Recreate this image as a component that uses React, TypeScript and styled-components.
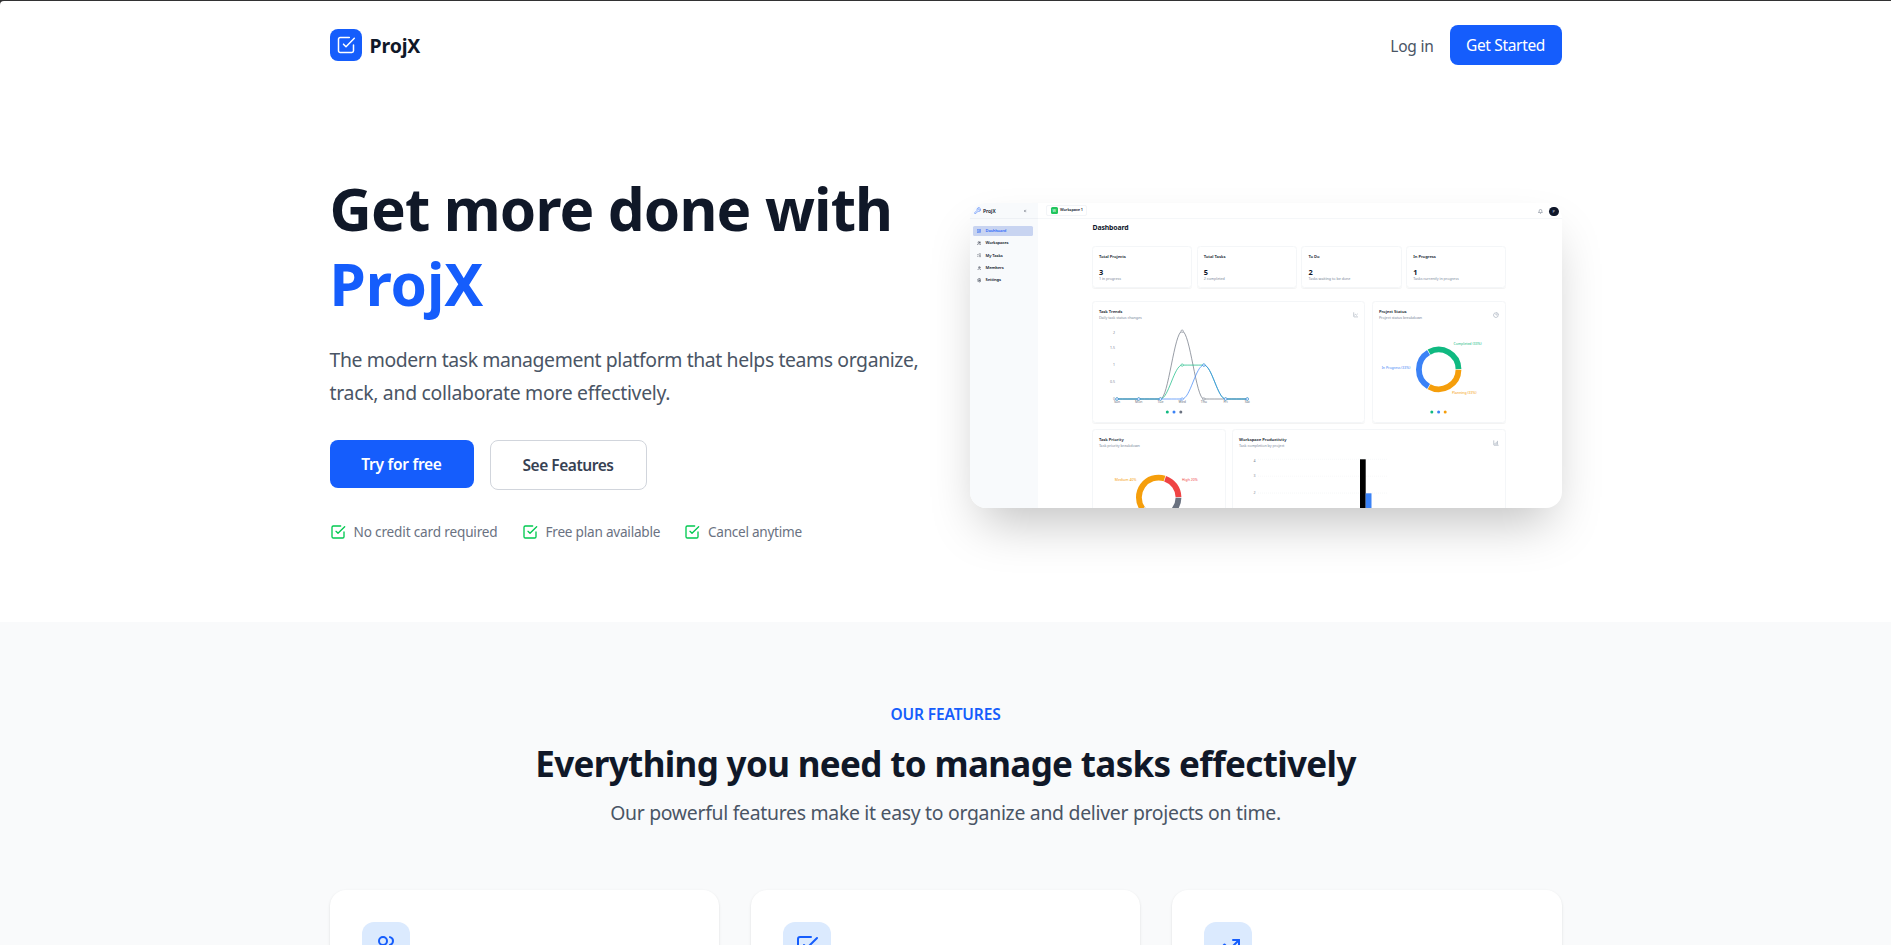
import React from "react";
import styled, { createGlobalStyle } from "styled-components";
import { FiCheckSquare, FiTrendingUp, FiUsers } from "react-icons/fi";
import {
  Bell,
  ChartColumnIncreasing,
  ChartLine,
  ChartPie,
  ChevronsLeft,
  LayoutDashboard,
  ListChecks,
  Settings,
  User,
  Users,
  Wrench,
} from "lucide-react";

const GlobalStyle = createGlobalStyle`
  * { box-sizing: border-box; }
  html, body { margin: 0; padding: 0; }
  html { overflow: hidden; background: #323233; }
  body { font-family: "Segoe UI", "Noto Sans", sans-serif; color: #101828; }
  h1, h2, p { margin: 0; }
  svg { display: block; flex-shrink: 0; }
`;

/* ---------- Page ---------- */

const Page = styled.div`
  height: 945px;
  overflow: hidden;
  padding-top: 1px;
  background: #323233;
`;

const Surface = styled.div`
  height: 100%;
  background: #fff;
  border-top-left-radius: 4px;
`;

const Container = styled.div`
  width: 1280px;
  margin: 0 auto;
  padding: 0 24px;
`;

const Header = styled(Container)`
  display: flex;
  align-items: center;
  justify-content: space-between;
  height: 88px;
`;

const Brand = styled.div`
  display: flex;
  align-items: center;
  gap: 8px;
`;

const BrandMark = styled.div`
  display: grid;
  place-items: center;
  width: 32px;
  height: 32px;
  border-radius: 8px;
  background: #155dfc;
  color: #fff;
`;

const BrandName = styled.span`
  font-size: 19.5px;
  line-height: 28px;
  font-weight: 700;
  letter-spacing: -0.15px;
  padding-top: 2px;
`;

const HeaderActions = styled.div`
  display: flex;
  align-items: center;
  gap: 16px;
`;

const LoginLink = styled.a`
  padding-top: 1px;
  font-size: 15.5px;
  line-height: 24px;
  letter-spacing: -0.25px;
  color: #4a5565;
`;

const GetStarted = styled.a`
  display: block;
  width: 112px;
  padding: 8px 0;
  border-radius: 8px;
  background: #155dfc;
  color: #fff;
  text-align: center;
  font-size: 15.5px;
  line-height: 24px;
  letter-spacing: -0.33px;
`;

/* ---------- Hero ---------- */

const Hero = styled(Container)`
  display: grid;
  grid-template-columns: 1fr 1fr;
  gap: 48px;
  align-items: center;
  padding-top: 80px;
  padding-bottom: 80px;
`;

const Title = styled.h1`
  padding-top: 2px;
  height: 150px;
  font-size: 58.4px;
  line-height: 75px;
  font-weight: 700;
  letter-spacing: -0.86px;
  white-space: nowrap;
`;

const TitleAccent = styled.span`
  display: block;
  color: #155dfc;
  letter-spacing: -0.1px;
`;

const Lead = styled.p`
  margin-top: 24px;
  padding-top: 1px;
  height: 65px;
  font-size: 19.4px;
  line-height: 32.5px;
  letter-spacing: -0.392px;
  color: #4a5565;
  white-space: nowrap;
`;

const LeadEnd = styled.span`
  display: block;
  letter-spacing: -0.29px;
`;

const HeroButtons = styled.div`
  display: flex;
  align-items: flex-start;
  gap: 16px;
  margin-top: 32px;
`;

const HeroButton = styled.a<{ $outline?: boolean }>`
  width: ${(p) => (p.$outline ? 157 : 144)}px;
  padding: 12px 0;
  border: ${(p) => (p.$outline ? "1px solid #d1d5dc" : "none")};
  border-radius: 8px;
  background: ${(p) => (p.$outline ? "#fff" : "#155dfc")};
  color: ${(p) => (p.$outline ? "#364153" : "#fff")};
  text-align: center;
  font-size: 15.5px;
  font-weight: 600;
  line-height: 24px;
  letter-spacing: ${(p) => (p.$outline ? -0.46 : -0.28)}px;
`;

const Perks = styled.div`
  display: flex;
  gap: 24px;
  margin-top: 32px;
`;

const Perk = styled.div<{ $width: number; $tracking: number }>`
  display: flex;
  align-items: center;
  gap: 8px;
  width: ${(p) => p.$width}px;
  font-size: 13.6px;
  line-height: 20px;
  letter-spacing: ${(p) => p.$tracking}px;
  color: #6a7282;
  white-space: nowrap;
  svg {
    color: #00c950;
  }
`;

/* ---------- Dashboard preview ---------- */

const Preview = styled.div`
  display: flex;
  height: 305px;
  border-radius: 16px;
  overflow: hidden;
  background: #fff;
  box-shadow: 0 25px 50px -12px rgba(0, 0, 0, 0.25);
  color: #0f172a;
  font-size: 4.1px;
  line-height: 6px;
`;

const Side = styled.div`
  width: 68px;
  background: #f8fafc;
`;

const SideHead = styled.div`
  display: flex;
  align-items: center;
  height: 16px;
  padding: 0 11px 0 4px;
  border-bottom: 0.5px solid #eef1f5;
  font-size: 5px;
  font-weight: 600;
  svg:first-child {
    color: #3b75fb;
    margin-right: 2px;
  }
  svg:last-child {
    margin-left: auto;
  }
`;

const Nav = styled.div`
  display: flex;
  flex-direction: column;
  gap: 2.4px;
  padding: 6.8px 5px 0 3px;
`;

const NavItem = styled.div<{ $active?: boolean }>`
  display: flex;
  align-items: center;
  gap: 4.5px;
  height: 10px;
  padding-left: 4px;
  border-radius: 1.6px;
  background: ${(p) => (p.$active ? "#c8d4f1" : "transparent")};
  color: ${(p) => (p.$active ? "#2f6bfa" : "#0f172a")};
  font-weight: 600;
  letter-spacing: -0.12px;
`;

const Main = styled.div`
  flex: 1;
`;

const TopBar = styled.div`
  display: flex;
  align-items: center;
  height: 16px;
  padding: 0 3px 0 8.5px;
  border-bottom: 0.5px solid #f5f7f9;
`;

const WorkspacePill = styled.div`
  display: flex;
  align-items: center;
  gap: 2.4px;
  width: 40.5px;
  height: 10.4px;
  padding-left: 3.6px;
  border: 0.5px solid #f3f5f8;
  border-radius: 2px;
  font-size: 3.9px;
  font-weight: 600;
  letter-spacing: -0.1px;
  white-space: nowrap;
`;

const WorkspaceBadge = styled.span`
  width: 7px;
  height: 7px;
  border-radius: 1.5px;
  background: #22c55e;
  color: #d9f7e4;
  text-align: center;
  font-size: 3.6px;
  line-height: 7px;
`;

const TopActions = styled.div`
  display: flex;
  align-items: center;
  gap: 6px;
  margin-left: auto;
  padding-top: 2px;
`;

const Avatar = styled.span`
  width: 9.4px;
  height: 9.4px;
  border-radius: 50%;
  background: #0f172a;
  color: #cbd5e1;
  text-align: center;
  font-size: 4px;
  line-height: 9.4px;
`;

const Board = styled.div`
  width: 414.4px;
  margin-left: 54.4px;
`;

const BoardTitle = styled.div`
  padding: 4.2px 0 0 0.6px;
  height: 26.7px;
  font-size: 6.9px;
  line-height: 10px;
  font-weight: 700;
  letter-spacing: -0.12px;
`;

const Panel = styled.div<{ $height: number }>`
  position: relative;
  height: ${(p) => p.$height}px;
  border: 1px solid #f4f6f8;
  border-radius: 3.5px;
  box-shadow: 0 0.4px 0.8px rgba(0, 0, 0, 0.05);
  padding: 7px 6px 0;
`;

const StatGrid = styled.div`
  display: grid;
  grid-template-columns: repeat(4, 1fr);
  gap: 4.7px;
`;

const StatValue = styled.div`
  margin-top: 8.6px;
  font-size: 7.4px;
  line-height: 8px;
  font-weight: 700;
`;

const PanelTitle = styled.div`
  font-size: 4.2px;
  line-height: 6px;
  font-weight: 600;
  letter-spacing: -0.04px;
`;

const Muted = styled.div`
  font-size: 3.7px;
  line-height: 6px;
  letter-spacing: -0.03px;
  color: #7a879a;
`;

const PanelRow = styled.div<{ $columns: string; $top: number; $gap: number }>`
  display: grid;
  grid-template-columns: ${(p) => p.$columns};
  gap: ${(p) => p.$gap}px;
  margin-top: ${(p) => p.$top}px;
`;

const PanelHead = styled.div`
  display: flex;
  align-items: center;
  justify-content: space-between;
  color: #0f172a;
  svg {
    color: #8591a3;
  }
`;

const Plot = styled.svg`
  position: absolute;
  left: -0.6px;
  top: -1px;
  overflow: hidden;
  font-size: 3.5px;
`;

/* ---------- Features ---------- */

const Features = styled.section`
  height: 330px;
  padding-top: 80px;
  background: #f9fafb;
  text-align: center;
`;

const Eyebrow = styled.p`
  font-size: 15.5px;
  line-height: 24px;
  font-weight: 600;
  letter-spacing: -0.12px;
  color: #155dfc;
`;

const SectionTitle = styled.h2`
  margin-top: 16px;
  padding-top: 2px;
  height: 40px;
  font-size: 35px;
  line-height: 40px;
  font-weight: 700;
  letter-spacing: -0.65px;
`;

const SectionText = styled.p`
  margin-top: 16px;
  padding-top: 1px;
  height: 28px;
  font-size: 19.4px;
  line-height: 28px;
  letter-spacing: -0.29px;
  color: #4a5565;
`;

const CardGrid = styled(Container)`
  display: grid;
  grid-template-columns: repeat(3, 1fr);
  gap: 32px;
  margin-top: 64px;
`;

const Card = styled.div`
  height: 240px;
  padding: 32px;
  border-radius: 16px;
  background: #fff;
  box-shadow: 0 1px 3px rgba(0, 0, 0, 0.1), 0 1px 2px -1px rgba(0, 0, 0, 0.1);
`;

const CardIcon = styled.div`
  display: grid;
  place-items: center;
  width: 48px;
  height: 48px;
  border-radius: 12px;
  background: #dbeafe;
  color: #155dfc;
`;

/* ---------- Charts ---------- */

const polar = (cx: number, cy: number, r: number, deg: number) => {
  const a = (deg * Math.PI) / 180;
  return `${(cx + r * Math.cos(a)).toFixed(2)} ${(cy - r * Math.sin(a)).toFixed(2)}`;
};

type Slice = { from: number; to: number; color: string };

const Donut = ({ cx, cy, slices }: { cx: number; cy: number; slices: Slice[] }) => (
  <g fill="none" strokeWidth={5.8}>
    {slices.map((s) => (
      <path
        key={s.from}
        stroke={s.color}
        d={`M${polar(cx, cy, 19.8, s.from + 0.9)} A19.8 19.8 0 0 0 ${polar(cx, cy, 19.8, s.to - 0.9)}`}
      />
    ))}
  </g>
);

const DAYS = ["Sun", "Mon", "Tue", "Wed", "Thu", "Fri", "Sat"];
const dayX = (i: number) => 25 + i * 21.72;
const levelY = (v: number) => 98 - v * 33.9;

const curve = (values: number[]) =>
  values
    .map((v, i) => {
      if (i === 0) return `M${dayX(0)} ${levelY(v)}`;
      const x0 = dayX(i - 1);
      const x1 = dayX(i);
      return `C${x0 + 8} ${levelY(values[i - 1])} ${x1 - 8} ${levelY(v)} ${x1} ${levelY(v)}`;
    })
    .join(" ");

const SERIES = [
  { color: "#6b7280", values: [0, 0, 0, 2, 0, 0, 0] },
  { color: "#10b981", values: [0, 0, 0, 1, 1, 0, 0] },
  { color: "#3b82f6", values: [0, 0, 0, 0, 1, 0, 0] },
];

const TrendPlot = () => (
  <Plot width="273" height="121">
    {[2, 1.5, 1, 0.5, 0].map((v) => (
      <text key={v} x="23" y={levelY(v) + (v === 2 ? 2.4 : 1.2)} textAnchor="end" fill="#7b8494">
        {v}
      </text>
    ))}
    {DAYS.map((d, i) => (
      <text key={d} x={dayX(i)} y="102.4" textAnchor="middle" fill="#6b7280">
        {d}
      </text>
    ))}
    {SERIES.map((s) => (
      <g key={s.color} fill="none" stroke={s.color} strokeWidth="0.7">
        <path d={curve(s.values)} />
        {s.values.map((v, i) => (
          <circle key={i} cx={dayX(i)} cy={levelY(v)} r="1.2" fill="#fff" strokeWidth="0.55" />
        ))}
      </g>
    ))}
    <circle cx="75.3" cy="111" r="1.5" fill="#10b981" />
    <circle cx="82" cy="111" r="1.5" fill="#3b82f6" />
    <circle cx="88.8" cy="111" r="1.5" fill="#6b7280" />
  </Plot>
);

const StatusPlot = () => (
  <Plot width="133.7" height="121">
    <Donut
      cx={66.7}
      cy={68.4}
      slices={[
        { from: 0, to: 120, color: "#10b981" },
        { from: 120, to: 240, color: "#3b82f6" },
        { from: 240, to: 360, color: "#f59e0b" },
      ]}
    />
    <text x="81.5" y="44.3" fill="#10b981">Completed (33%)</text>
    <text x="38.3" y="68" fill="#3b82f6" textAnchor="end">In Progress (33%)</text>
    <text x="80" y="92.8" fill="#f59e0b">Planning (33%)</text>
    <circle cx="59.8" cy="111" r="1.5" fill="#10b981" />
    <circle cx="66.6" cy="111" r="1.5" fill="#3b82f6" />
    <circle cx="73.2" cy="111" r="1.5" fill="#f59e0b" />
  </Plot>
);

const PriorityPlot = () => (
  <Plot width="133.7" height="121">
    <Donut
      cx={66.7}
      cy={68.4}
      slices={[
        { from: 0, to: 72, color: "#ef4444" },
        { from: 72, to: 216, color: "#f59e0b" },
        { from: 216, to: 360, color: "#6b7280" },
      ]}
    />
    <text x="44.3" y="51.8" fill="#f59e0b" textAnchor="end">Medium 40%</text>
    <text x="90" y="51.8" fill="#ef4444">High 20%</text>
  </Plot>
);

const ProductivityPlot = () => (
  <Plot width="274" height="121">
    {[4, 3, 2].map((v, i) => (
      <g key={v}>
        <text x="23.6" y={i === 0 ? 32.8 : 31.5 + i * 16.8} textAnchor="end" fill="#7b8494">
          {v}
        </text>
        <path d={`M26 ${30.3 + i * 16.9}H156`} stroke="#eceef1" strokeWidth="0.4" strokeDasharray="1 1" />
      </g>
    ))}
    <rect x="128" y="30.3" width="5.7" height="80" fill="#000" />
    <rect x="133.7" y="64.3" width="5.8" height="50" fill="#3b82f6" />
  </Plot>
);

const NAV = [
  { label: "Dashboard", Icon: LayoutDashboard },
  { label: "Workspaces", Icon: Users },
  { label: "My Tasks", Icon: ListChecks },
  { label: "Members", Icon: User },
  { label: "Settings", Icon: Settings },
];

const STATS = [
  { label: "Total Projects", value: 3, note: "1 in progress" },
  { label: "Total Tasks", value: 5, note: "2 completed" },
  { label: "To Do", value: 2, note: "Tasks waiting to be done" },
  { label: "In Progress", value: 1, note: "Tasks currently in progress" },
];

const DashboardPreview = () => (
  <Preview>
    <Side>
      <SideHead>
        <Wrench size={7.4} />
        ProjX
        <ChevronsLeft size={4} />
      </SideHead>
      <Nav>
        {NAV.map(({ label, Icon }, i) => (
          <NavItem key={label} $active={i === 0}>
            <Icon size={4.6} />
            {label}
          </NavItem>
        ))}
      </Nav>
    </Side>
    <Main>
      <TopBar>
        <WorkspacePill>
          <WorkspaceBadge>W</WorkspaceBadge>
          Workspace 1
        </WorkspacePill>
        <TopActions>
          <Bell size={5} color="#475569" />
          <Avatar>P</Avatar>
        </TopActions>
      </TopBar>
      <Board>
        <BoardTitle>Dashboard</BoardTitle>
        <StatGrid>
          {STATS.map((s) => (
            <Panel key={s.label} $height={42}>
              <PanelTitle>{s.label}</PanelTitle>
              <StatValue>{s.value}</StatValue>
              <Muted>{s.note}</Muted>
            </Panel>
          ))}
        </StatGrid>
        <PanelRow $columns="273.4px 1fr" $top={13.6} $gap={6.6}>
          <Panel $height={121.4}>
            <PanelHead>
              <div>
                <PanelTitle>Task Trends</PanelTitle>
                <Muted>Daily task status changes</Muted>
              </div>
              <ChartLine size={5.6} />
            </PanelHead>
            <TrendPlot />
          </Panel>
          <Panel $height={121.4}>
            <PanelHead>
              <div>
                <PanelTitle>Project Status</PanelTitle>
                <Muted>Project status breakdown</Muted>
              </div>
              <ChartPie size={6} />
            </PanelHead>
            <StatusPlot />
          </Panel>
        </PanelRow>
        <PanelRow $columns="134.2px 1fr" $top={6} $gap={6}>
          <Panel $height={121.4}>
            <PanelTitle>Task Priority</PanelTitle>
            <Muted>Task priority breakdown</Muted>
            <PriorityPlot />
          </Panel>
          <Panel $height={121.4}>
            <PanelHead>
              <div>
                <PanelTitle>Workspace Productivity</PanelTitle>
                <Muted>Task completion by project</Muted>
              </div>
              <ChartColumnIncreasing size={6} />
            </PanelHead>
            <ProductivityPlot />
          </Panel>
        </PanelRow>
      </Board>
    </Main>
  </Preview>
);

const PERKS = [
  { label: "No credit card required", width: 168, tracking: -0.17 },
  { label: "Free plan available", width: 138.5, tracking: -0.23 },
  { label: "Cancel anytime", width: 118, tracking: -0.27 },
];

export default function App() {
  return (
    <Page>
      <GlobalStyle />
      <Surface>
        <Header>
          <Brand>
            <BrandMark>
              <FiCheckSquare size={20} strokeWidth={1.8} />
            </BrandMark>
            <BrandName>ProjX</BrandName>
          </Brand>
          <HeaderActions>
            <LoginLink>Log in</LoginLink>
            <GetStarted>Get Started</GetStarted>
          </HeaderActions>
        </Header>

        <Hero>
          <div>
            <Title>
              Get more done with
              <TitleAccent>ProjX</TitleAccent>
            </Title>
            <Lead>
              The modern task management platform that helps teams organize,
              <LeadEnd>track, and collaborate more effectively.</LeadEnd>
            </Lead>
            <HeroButtons>
              <HeroButton>Try for free</HeroButton>
              <HeroButton $outline>See Features</HeroButton>
            </HeroButtons>
            <Perks>
              {PERKS.map((p) => (
                <Perk key={p.label} $width={p.width} $tracking={p.tracking}>
                  <FiCheckSquare size={16} />
                  {p.label}
                </Perk>
              ))}
            </Perks>
          </div>
          <DashboardPreview />
        </Hero>

        <Features>
          <Eyebrow>OUR FEATURES</Eyebrow>
          <SectionTitle>Everything you need to manage tasks effectively</SectionTitle>
          <SectionText>
            Our powerful features make it easy to organize and deliver projects on time.
          </SectionText>
          <CardGrid>
            <Card>
              <CardIcon>
                <FiUsers size={24} />
              </CardIcon>
            </Card>
            <Card>
              <CardIcon>
                <FiCheckSquare size={24} />
              </CardIcon>
            </Card>
            <Card>
              <CardIcon>
                <FiTrendingUp size={24} />
              </CardIcon>
            </Card>
          </CardGrid>
        </Features>
      </Surface>
    </Page>
  );
}
